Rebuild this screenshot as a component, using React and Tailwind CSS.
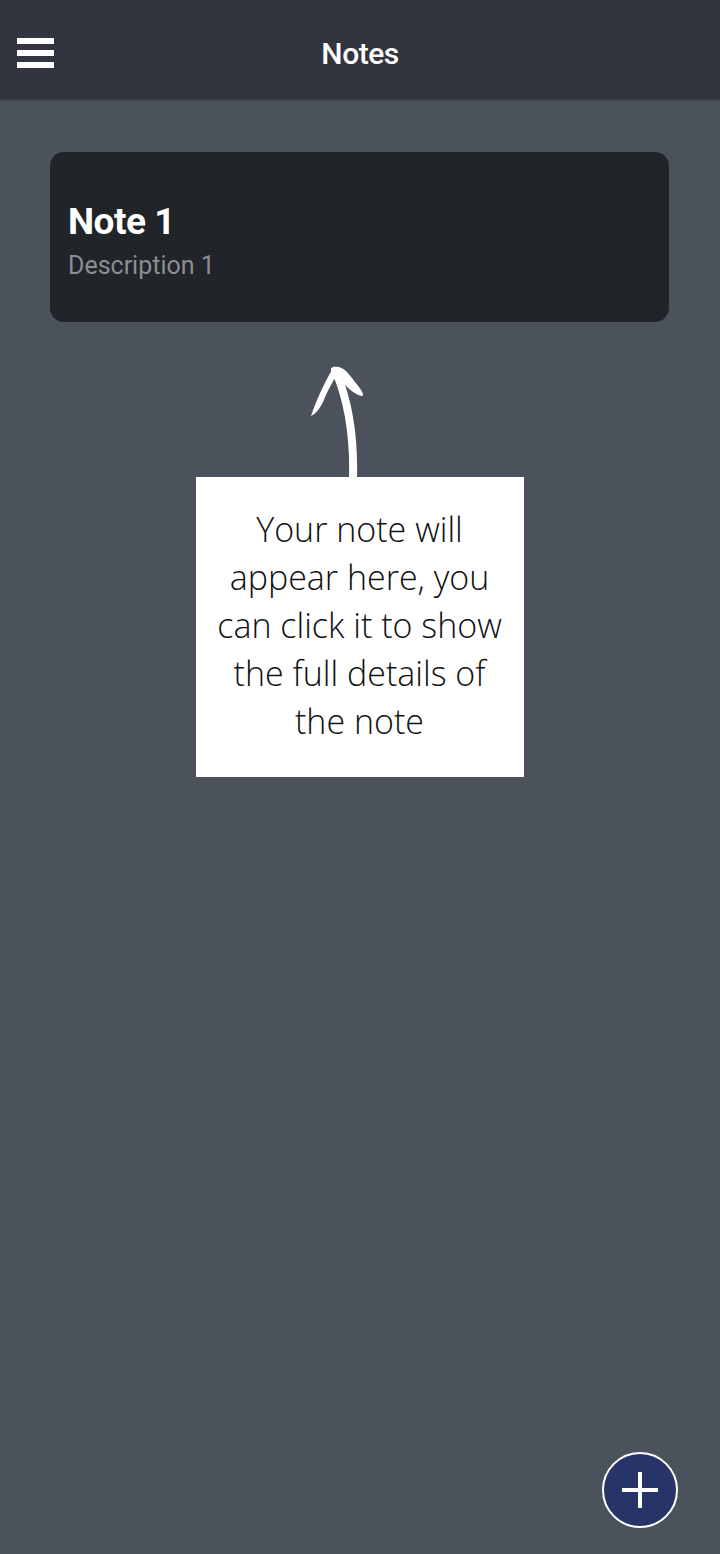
import React from 'react';

const Arrow = () => (
    <svg width="80" height="120" viewBox="290 360 80 120" className="block">
        {/* shaft */}
        <path d="M353 478 C354 440 350 405 336 372" fill="none" stroke="#fff" strokeWidth="8" strokeLinecap="round" />
        {/* left wing */}
        <path d="M334 366 C326 380 317 398 311 416 C316 414 320 408 323 402 C327 392 332 382 338 374 Z" fill="#fff" />
        {/* right wing */}
        <path d="M331 368 C340 364 346 370 352 378 C358 386 364 392 363 396 C357 396 350 390 344 384 C339 379 334 375 331 372 Z" fill="#fff" />
    </svg>
);

const App = () => {
    return (
        <div className="w-[720px] h-[1554px] bg-[#4b525b] flex flex-col relative overflow-hidden" style={{ fontFamily: 'Roboto, "Liberation Sans", sans-serif' }}>
            {/* Top bar */}
            <header className="h-[101px] bg-[#323540] border-b-2 border-[#3f444e] flex items-center relative shrink-0">
                <button className="absolute left-[17px] top-[38px] flex flex-col gap-[6px]">
                    <span className="block w-[37px] h-[6px] bg-white" />
                    <span className="block w-[37px] h-[6px] bg-white" />
                    <span className="block w-[37px] h-[6px] bg-white" />
                </button>
                <h1 className="w-full text-center text-white text-[30px] font-medium pt-[8px] tracking-[-0.5px]">Notes</h1>
            </header>

            {/* Note list */}
            <div className="px-[50px] pt-[51px] pr-[51px]">
                <div className="bg-[#212429] rounded-[14px] h-[170px] px-[18px] flex flex-col justify-center pt-[8px]">
                    <p className="text-white text-[37px] font-bold leading-[42px] tracking-[-0.5px]">Note 1</p>
                    <p className="text-[#8b8e93] text-[25px] leading-[30px] mt-[8px]">Description 1</p>
                </div>
            </div>

            {/* Hint */}
            <div className="flex flex-col items-center mt-[38px] ml-[-1px]">
                <div className="mr-[59px]">
                    <Arrow />
                </div>
                <div className="w-[328px] h-[300px] bg-white mt-[-3px] flex items-center justify-center pb-[4px]">
                    <p className="text-[#111] text-[34px] font-light leading-[48px] text-center px-[16px]" style={{ fontFamily: '"Open Sans", sans-serif' }}>
                        Your note will appear here, you can click it to show the full details of the note
                    </p>
                </div>
            </div>

            {/* FAB */}
            <button className="absolute left-[602px] top-[1452px] w-[76px] h-[76px] rounded-full bg-[#283368] border-2 border-white flex items-center justify-center">
                <svg width="40" height="40" viewBox="0 0 40 40">
                    <path d="M20 2 V38 M2 20 H38" stroke="#fff" strokeWidth="4" />
                </svg>
            </button>
        </div>
    );
};

export default App;
